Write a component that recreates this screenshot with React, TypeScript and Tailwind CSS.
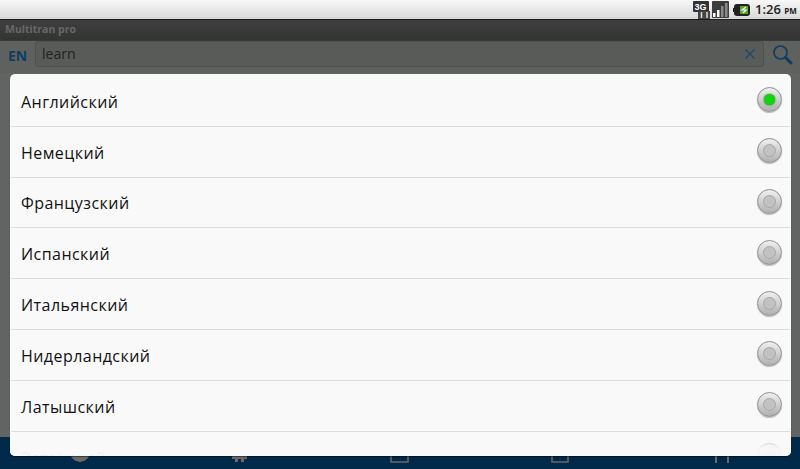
import React from "react";

const langs = ["Английский", "Немецкий", "Французский", "Испанский", "Итальянский", "Нидерландский", "Латышский", "Эстонский"];

function Radio({ on }: { on: boolean }) {
  return (
    <div className="w-[25px] h-[25px] -translate-y-[1px] rounded-full bg-gradient-to-b from-[#f0f0f0] to-[#b0b0b0] border border-[#8f8f8f] flex items-center justify-center shrink-0 shadow-[0_1px_1px_rgba(0,0,0,0.25)]">
      {on ? (
        <div className="w-[11px] h-[11px] rounded-full bg-[#12d312] shadow-[0_0_2px_#0a7a0a]" />
      ) : (
        <div className="w-[13px] h-[13px] rounded-full bg-[#c2c2c2] border border-[#a8a8a8]" />
      )}
    </div>
  );
}

export default function App() {
  return (
    <div className="relative w-[800px] h-[469px] overflow-hidden bg-[#626463] font-['Open_Sans','DejaVu_Sans',sans-serif]">
      {/* Status bar */}
      <div className="h-[19px] bg-gradient-to-b from-[#f8f8f8] to-[#d8d8d8] flex items-center justify-end pr-[5px]">
        <svg width="17" height="18" viewBox="0 0 17 18">
          <rect x="0" y="0" width="16" height="11" rx="1" fill="#333" />
          <text x="1.5" y="9" fontSize="9" fontWeight="700" fill="#fff" fontFamily="Liberation Sans">3G</text>
          <rect x="5" y="10" width="12" height="8" fill="#444" />
          <path d="M8.5 11v6M14 11v6" stroke="#ddd" strokeWidth="1.5" />
        </svg>
        <svg width="17" height="17" viewBox="0 0 17 17" className="ml-[2px]">
          <rect width="17" height="17" rx="1" fill="#3c3c3c" />
          <rect x="1" y="12" width="2.5" height="4" fill="#fff" />
          <rect x="5" y="9" width="2.5" height="7" fill="#fff" />
          <rect x="9" y="5" width="2.5" height="11" fill="#8a8a8a" />
          <rect x="13" y="2" width="2.5" height="14" fill="#8a8a8a" />
        </svg>
        <svg width="17" height="12" viewBox="0 0 17 12" className="ml-[4px]">
          <rect x="1" y="0" width="16" height="12" rx="3" fill="#222" />
          <rect x="0" y="4" width="2" height="4" fill="#222" />
          <rect x="7" y="2" width="8" height="8" fill="#58a52c" />
          <path d="M13 3 9 6h4l-3 3" stroke="#fff" strokeWidth="1.2" fill="none" />
        </svg>
        <span className="ml-[5px] w-[40px] whitespace-nowrap text-right text-[13px] font-semibold text-[#222] leading-none">
          1:26 <span className="text-[8px] font-bold">PM</span>
        </span>
      </div>

      {/* Title bar */}
      <div className="h-[21px] border-t border-[#1c1c1c] bg-gradient-to-b from-[#3e3f3e] to-[#333433] pl-[5px] pb-[1px] flex items-center">
        <span className="text-[10.5px] font-bold text-[#666866] leading-none">Multitran pro</span>
      </div>

      {/* Search row */}
      <div className="h-[33px] bg-[#5f615f] border-t border-[#3a3a3a] flex items-start pl-[8px] pr-[7px]">
        <span className="w-[27px] mt-[8px] text-[14px] font-bold text-[#0e3d63] leading-none">EN</span>
        <div className="flex-1 h-[26px] rounded-[3px] bg-[#595b59] border border-[#4f514f] flex items-center justify-between pl-[6px] pr-[7px]">
          <span className="text-[14px] text-[#222] leading-none">learn</span>
          <svg width="12" height="12" viewBox="0 0 12 12">
            <path d="M1.5 1.5 10.5 10.5M10.5 1.5 1.5 10.5" stroke="#174a70" strokeWidth="1.2" />
          </svg>
        </div>
        <svg width="21" height="21" viewBox="0 0 21 21" className="ml-[8px] mt-[3px]">
          <circle cx="8.5" cy="8.5" r="6.5" fill="none" stroke="#0e3d63" strokeWidth="1.7" />
          <path d="M13.5 13.5 19 19" stroke="#0e3d63" strokeWidth="3" strokeLinecap="round" />
        </svg>
      </div>

      {/* Bottom bar behind the dialog */}
      <div className="absolute left-0 right-0 bottom-0 h-[32px] bg-[#012a4a]">
        <svg width="800" height="32" viewBox="0 0 800 32" className="absolute inset-0">
          <circle cx="80" cy="15" r="10" fill="#6a6a6a" />
          <path d="M232 19h15v3h-3v3h-3v-3h-3v3h-3v-3h-3z" fill="#6a6a6a" />
          <rect x="391" y="15" width="17" height="10" fill="none" stroke="#6a6a6a" strokeWidth="1.5" />
          <rect x="552" y="15" width="16" height="10" fill="none" stroke="#6a6a6a" strokeWidth="1.5" />
          <path d="M716 16v10M728 16v10" stroke="#6a6a6a" strokeWidth="2" />
        </svg>
      </div>

      {/* Dialog */}
      <div className="absolute left-[10px] top-[74px] w-[781px] h-[382px] pt-[2px] rounded-[5px] bg-[#f9f9f9] overflow-hidden shadow-[0_1px_1px_rgba(0,0,0,0.5)]">
        {langs.map((l, i) => (
          <div
            key={l}
            className={`h-[50.8px] mx-[1px] flex items-center justify-between pl-[10px] pr-[8px] ${i < 7 ? "border-b border-[#dcdcdc]" : ""}`}
          >
            <span className="text-[16px] translate-y-[1px] text-[#111] leading-none tracking-[0.45px]">{l}</span>
            <Radio on={i === 0} />
          </div>
        ))}
        <div className="absolute left-0 right-0 bottom-0 h-[24px] bg-gradient-to-b from-[#f9f9f9]/0 from-0% to-[#f9f9f9]/95 to-70%" />
      </div>
    </div>
  );
}
